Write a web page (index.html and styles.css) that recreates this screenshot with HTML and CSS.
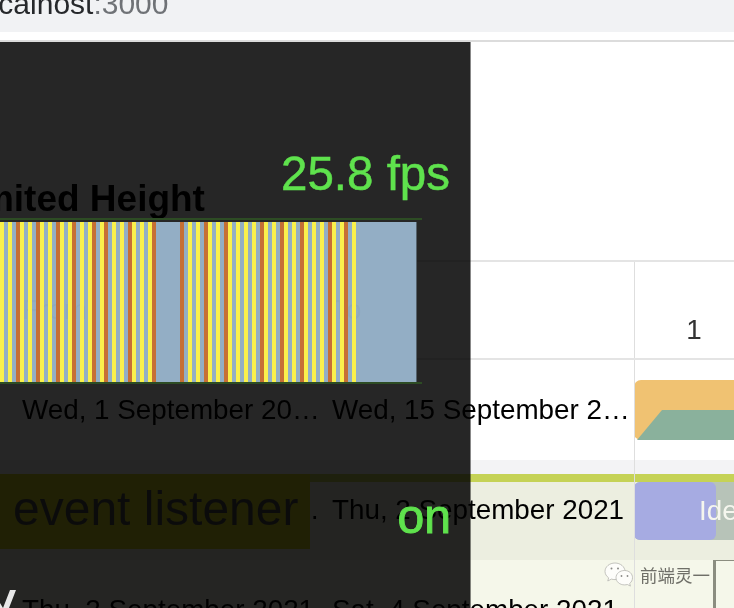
FILE: index.html
```html
<!DOCTYPE html>
<html lang="en">
<head>
  <meta charset="UTF-8" />
  <meta name="viewport" content="width=device-width, initial-scale=1.0"/>
  <title>Limited Height</title>
  <link rel="stylesheet" href="styles.css">
</head>
<body>
  <div class="address-bar">
    <span class="address-text">localhost<span class="address-port">:3000</span></span>
  </div>

  <main class="page">
    <h2 class="page-title">Limited Height</h2>

    <div class="table">
      <div class="row row-head">
        <div class="cell">From</div>
        <div class="cell">To</div>
        <div class="timeline timeline-head">
          <div class="day-label">1</div>
        </div>
      </div>

      <div class="row">
        <div class="cell"><span class="cell-text">Wed, 1 September 2021</span></div>
        <div class="cell"><span class="cell-text">Wed, 15 September 2021</span></div>
        <div class="timeline">
          <div class="task-project">
            <div class="task-project-progress"></div>
          </div>
        </div>
      </div>

      <div class="row row-current">
        <div class="cell"><span class="cell-text">Wed, 1 September 2021</span></div>
        <div class="cell"><span class="cell-text">Thu, 2 September 2021</span></div>
        <div class="timeline">
          <div class="task">
            <div class="task-progress"></div>
            <span class="task-name">Ideation</span>
          </div>
        </div>
      </div>

      <div class="row row-alt">
        <div class="cell"><span class="cell-text">Thu, 2 September 2021</span></div>
        <div class="cell"><span class="cell-text">Sat, 4 September 2021</span></div>
        <div class="timeline">
          <div class="task-box"></div>
        </div>
      </div>
    </div>

    <div class="paint-flash">event listener</div>

    <!-- Rendering stats overlay -->
    <div class="meter-shade"></div>
    <div class="meter">
      <div class="meter-fps">25.8 fps</div>
      <div class="meter-graph">
        <svg class="meter-bars" width="416" height="160" viewBox="0 0 416 160">
          <rect class="bars-bg" width="416" height="160"/>
          <g class="bars-stripes">
            <path class="bars-yellow" d="M2 0v160M10 0v160M22 0v160M30 0v160M42 0v160M50 0v160M62 0v160M70 0v160M82 0v160M90 0v160M102 0v160M114 0v160M122 0v160M134 0v160M142 0v160M150 0v160M190 0v160M198 0v160M210 0v160M218 0v160M230 0v160M238 0v160M246 0v160M254 0v160M266 0v160M274 0v160M286 0v160M294 0v160M306 0v160M314 0v160M322 0v160M334 0v160M342 0v160M354 0v160"/>
            <path class="bars-orange" d="M18 0v160M38 0v160M58 0v160M74 0v160M94 0v160M106 0v160M130 0v160M154 0v160M182 0v160M206 0v160M226 0v160M262 0v160M282 0v160M302 0v160M330 0v160M346 0v160"/>
          </g>
        </svg>
      </div>
      <div class="meter-status">on</div>
      <svg class="meter-tick" width="20" height="18" viewBox="0 0 20 18">
        <path d="M10 0H16L9 18H3zM0 13L3 18H0z"/>
      </svg>
    </div>

    <!-- Watermark -->
    <div class="watermark">
      <svg class="watermark-icon" width="30" height="26" viewBox="0 0 30 26">
        <path d="M11 1C5.5 1 1 4.8 1 9.4c0 2.6 1.4 4.8 3.6 6.400L3.800 19l3.600-1.900c1.100.3 2.300.5 3.600.5 5.500 0 10-3.700 10-8.200S16.500 1 11 1z"/>
        <path d="M20.500 8.500c-4.700 0-8.500 3.200-8.500 7.200s3.800 7.200 8.500 7.200c1 0 2-.2 2.900-.4l3 1.600-.7-2.700c1.800-1.300 2.800-3.400 2.800-5.700 0-4-3.300-7.200-8-7.200z"/>
        <circle class="eye" cx="7.500" cy="6.500" r="1"/>
        <circle class="eye" cx="14" cy="6.500" r="1"/>
        <circle class="eye" cx="17.500" cy="14" r=".9"/>
        <circle class="eye" cx="23.500" cy="14" r=".9"/>
      </svg>
      <span class="watermark-text">前端灵一</span>
    </div>
  </main>
</body>
</html>
```

FILE: styles.css
```css
body {
  margin: 0;
  height: 608px;
  overflow: hidden;
  background: white;
  font-family: 'Liberation Sans', Arial, sans-serif;
  color: #000;
}

.address-bar {
  height: 32px;
  margin-bottom: 8px;
  overflow: hidden;
  background: #f1f2f4;
}

.address-text {
  display: block;
  margin: -11px 0 0 -25px;
  font-size: 30px;
  line-height: 30px;
  white-space: nowrap;
  color: #26282b;
}

.address-port {
  color: #6f7276;
}

.page {
  position: relative;
  height: 566px;
  overflow: hidden;
  border-top: 2px solid #dcdcdc;
}

.page-title {
  margin: 137px 0 41px -52px;
  font-size: 37px;
  line-height: 40px;
  font-weight: bold;
  white-space: nowrap;
}

/* Gantt table */
.row {
  display: grid;
  grid-template-columns: 322px 312px 1fr;
  height: 100px;
  box-sizing: border-box;
  font-size: 27.8px;
}

.row-head {
  border-top: 2px solid #e4e4e4;
  border-bottom: 2px solid #e4e4e4;
}

.row-current {
  background: linear-gradient(#f3f3f5 14px, #c5d256 14px, #c5d256 22px, #eceee0 22px);
}

.row-alt {
  background: #f5f7ea;
}

.cell {
  display: flex;
  align-items: center;
  padding-left: 22px;
  min-width: 0;
}

.cell + .cell {
  padding-left: 10px;
}

.cell-text {
  overflow: hidden;
  white-space: nowrap;
  text-overflow: ellipsis;
}

.timeline {
  border-left: 1px solid #dedede;
  overflow: hidden;
}

.timeline-head {
  display: flex;
  align-items: flex-end;
}

.day-label {
  flex-shrink: 0;
  width: 120px;
  height: 48px;
  margin-left: -1px;
  padding-bottom: 8px;
  box-sizing: border-box;
  background: white;
  text-align: center;
  line-height: 40px;
  color: #333;
}

.task-project {
  display: flex;
  align-items: flex-end;
  height: 60px;
  margin: 20px 0 0 -1px;
  border-radius: 7px 0 0 7px;
  background: #f0c272;
}

.task-project-progress {
  flex: 1;
  height: 30px;
  background: #8ab19c;
  clip-path: polygon(28px 0, 100% 0, 100% 100%, 3px 100%);
}

.task {
  position: relative;
  height: 58px;
  margin: 22px 0 0 -1px;
  background: #b7c3b8;
  border-radius: 6px 0 0 6px;
}

.task-progress {
  width: 82px;
  height: 100%;
  background: #a6abe2;
  border-radius: 6px;
}

.task-name {
  position: absolute;
  top: 9px;
  left: 65px;
  line-height: 40px;
  white-space: nowrap;
  color: #f5f6ee;
}

.task-box {
  width: 200px;
  height: 200px;
  margin: -2px 0 0 78px;
  box-sizing: border-box;
  border: 3px solid #8b8d80;
}

.paint-flash {
  position: absolute;
  top: 432px;
  left: 0;
  width: 310px;
  height: 75px;
  padding-left: 13px;
  box-sizing: border-box;
  background: #d4d420;
  font-size: 48px;
  line-height: 70px;
  white-space: nowrap;
  color: #4a4a4a;
}

/* Stats overlay */
.meter-shade {
  position: absolute;
  top: 0;
  left: 0;
  width: 470px;
  height: 100%;
  background: #262626;
  border-right: 1px solid #888;
  mix-blend-mode: multiply;
}

.meter {
  position: absolute;
  top: 0;
  left: 0;
  width: 470px;
  height: 100%;
  color: #5fe24d;
  text-align: right;
}

.meter-fps {
  margin-top: 104px;
  padding-right: 20px;
  font-size: 47.500px;
  line-height: 56px;
  -webkit-text-stroke: 0.5px #5fe24d;
}

.meter-graph {
  width: 422px;
  height: 166px;
  margin-top: 16px;
  padding-top: 2px;
  box-sizing: border-box;
  border-top: 2px solid #2d4c24;
  border-bottom: 2px solid #2d4c24;
  line-height: 0;
  text-align: left;
}

.meter-bars {
  border-right: 1px solid #55626c;
  box-sizing: content-box;
}

.bars-bg {
  fill: #a7c7e2;
  fill-opacity: 0.85;
}

.bars-stripes {
  filter: blur(0.3px);
  fill: none;
  stroke-width: 4;
}

.bars-yellow {
  stroke: #faf04c;
}

.bars-orange {
  stroke: #c66f35;
}

.meter-status {
  margin-top: 105px;
  padding-right: 19px;
  font-size: 48px;
  line-height: 56px;
  -webkit-text-stroke: 1px #5fe24d;
}

.meter-tick {
  position: absolute;
  left: 0;
  bottom: 0;
  fill: #e8e8e8;
}

/* Watermark */
.watermark {
  position: absolute;
  top: 520px;
  left: 604px;
  display: flex;
  align-items: center;
  gap: 6px;
}

.watermark-icon path {
  fill: #fdfdfa;
  stroke: #b5b5b0;
  stroke-width: 0.8;
}

.watermark-icon .eye {
  fill: #8a8a86;
}

.watermark-text {
  font-family: 'Noto Sans CJK SC', sans-serif;
  font-size: 17.5px;
  line-height: 26px;
  color: #6f6f68;
  white-space: nowrap;
}
```
